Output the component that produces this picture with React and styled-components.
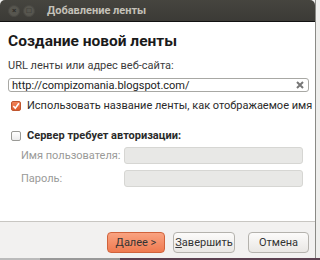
import React from "react";
import styled, { createGlobalStyle } from "styled-components";

const Global = createGlobalStyle`
  html, body { margin: 0; padding: 0; background: #eeeeec; }
  body { font-family: Roboto, "Noto Sans", sans-serif; width: 320px; height: 260px; overflow: hidden; white-space: nowrap; }
`;

const Window = styled.div`
  width: 316px;
  height: 258px;
  display: flex;
  flex-direction: column;
  border-right: 1px solid #8a8a86;
  box-sizing: border-box;
`;

const TitleBar = styled.div`
  height: 21px;
  flex: none;
  background: linear-gradient(#46453f, #3b3a36);
  border-bottom: 1px solid #111;
  border-radius: 5px 5px 0 0;
  display: flex;
  align-items: center;
  padding-left: 8px;
  gap: 3px;
`;

const WinBtn = styled.div`
  width: 10px;
  height: 10px;
  border-radius: 50%;
  background: #57564f;
  border: 1px solid #4a4944;
  display: flex;
  align-items: center;
  justify-content: center;
  color: #2c2b28;
  font-size: 8px;
  line-height: 1;
  font-weight: bold;
`;

const Title = styled.div`
  margin-left: 9px;
  color: #c4c1b8;
  font-size: 11px;
  font-weight: bold;
`;

const Body = styled.div`
  flex: 1;
  background: #fff;
  padding: 10px 6px 0 8px;
  display: flex;
  flex-direction: column;
`;

const Heading = styled.div`
  font-size: 15.5px;
  line-height: 18px;
  font-weight: bold;
  color: #1a1a1a;
`;

const Label = styled.div`
  font-size: 11px;
  line-height: 14px;
  color: ${p => (p.$muted ? "#9a9a98" : "#3c3c3c")};
  margin-top: ${p => p.$mt || 0}px;
`;

const Entry = styled.div`
  margin-top: ${p => p.$mt || 0}px;
  height: ${p => p.$h}px;
  box-sizing: border-box;
  border: 1px solid ${p => (p.$disabled ? "#d6d6d3" : "#a8a8a4")};
  border-radius: 3px;
  background: ${p => (p.$disabled ? "#e8e8e6" : "#fff")};
  display: flex;
  align-items: center;
  padding: 0 4px 0 3px;
  font-size: 11px;
  color: #222;
  flex: ${p => (p.$grow ? 1 : "none")};
`;

const EntryText = styled.span`
  flex: 1;
`;

const CheckRow = styled.div`
  display: flex;
  align-items: center;
  gap: 6px;
  line-height: 14px;
  margin-top: ${p => p.$mt}px;
  padding-left: 3px;
  font-size: 11px;
  color: #2a2a2a;
  font-weight: ${p => (p.$bold ? "bold" : "normal")};
`;

const Box = styled.div`
  width: 10px;
  height: 10px;
  box-sizing: border-box;
  border-radius: 2px;
  border: 1px solid ${p => (p.$checked ? "#c0562f" : "#9a9a96")};
  background: ${p => (p.$checked ? "linear-gradient(#f0845a, #dd5a2c)" : "linear-gradient(#fff, #ececec)")};
  display: flex;
  align-items: center;
  justify-content: center;
`;

const FieldRow = styled.div`
  display: flex;
  align-items: center;
  margin-top: ${p => p.$mt}px;
  padding-left: 13px;
  padding-right: 6px;
`;

const FieldLabel = styled(Label)`
  width: 103px;
`;

const Footer = styled.div`
  height: 37px;
  flex: none;
  box-sizing: border-box;
  background: #f2f1f0;
  border-top: 1px solid #c8c6c2;
  display: flex;
  justify-content: flex-end;
  align-items: flex-start;
  padding: 10px 6px 0 0;
`;

const Button = styled.button`
  height: 21px;
  width: ${p => p.$w}px;
  margin-left: ${p => p.$ml || 0}px;
  border-radius: 4px;
  font-family: inherit;
  font-size: 11px;
  color: #333;
  padding: 0;
  border: 1px solid ${p => (p.$primary ? "#d0633c" : "#b4b2ad")};
  background: ${p => (p.$primary ? "linear-gradient(#f9a381, #ef7a50)" : "linear-gradient(#fcfbfa, #e9e7e4)")};
  u { text-decoration: underline; }
`;

const Strip = styled.div`
  height: 2px;
  background: linear-gradient(90deg, #bbb 0 40px, #999 40px 120px, #5c4050 120px);
`;

export default function App() {
  return (
    <>
      <Global />
      <Window>
        <TitleBar>
          <WinBtn>×</WinBtn>
          <WinBtn>□</WinBtn>
          <Title>Добавление ленты</Title>
        </TitleBar>
        <Body>
          <Heading>Создание новой ленты</Heading>
          <Label $mt={9}>URL ленты или адрес веб-сайта:</Label>
          <Entry $mt={5} $h={14}>
            <EntryText>http://compizomania.blogspot.com/</EntryText>
            <svg width="8" height="8" viewBox="0 0 8 8">
              <path d="M1 1L7 7M7 1L1 7" stroke="#777" strokeWidth="2" />
            </svg>
          </Entry>
          <CheckRow $mt={7}>
            <Box $checked>
              <svg width="8" height="8" viewBox="0 0 9 9">
                <path d="M1.5 4.5L3.7 7L7.8 1.5" stroke="#fff" strokeWidth="1.8" fill="none" />
              </svg>
            </Box>
            Использовать название ленты, как отображаемое имя
          </CheckRow>
          <CheckRow $mt={16} $bold>
            <Box />
            Сервер требует авторизации:
          </CheckRow>
          <FieldRow $mt={4}>
            <FieldLabel $muted>Имя пользователя:</FieldLabel>
            <Entry $disabled $grow $h={17} />
          </FieldRow>
          <FieldRow $mt={6}>
            <FieldLabel $muted>Пароль:</FieldLabel>
            <Entry $disabled $grow $h={17} />
          </FieldRow>
        </Body>
        <Footer>
          <Button $primary $w={58}>Далее &gt;</Button>
          <Button $w={62} $ml={8}><u>З</u>авершить</Button>
          <Button $w={61} $ml={13}>Отмена</Button>
        </Footer>
      </Window>
      <Strip />
    </>
  );
}
